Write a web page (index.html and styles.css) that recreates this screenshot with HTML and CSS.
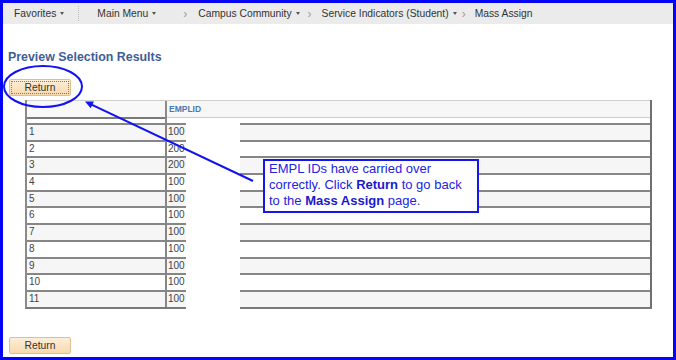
FILE: index.html
```html
<!DOCTYPE html>
<html lang="en">

<head>
    <meta charset="UTF-8">
    <meta name="viewport" content="width=device-width, initial-scale=1.0">
    <title>Mass Assign - Preview Selection Results</title>
    <link rel="stylesheet" href="styles.css">
</head>

<body>
    <div class="frame">
        <!-- top navigation / breadcrumbs -->
        <div class="nav">
            <span class="nav-item nav-fav">Favorites<i class="caret"></i></span>
            <span class="nav-sep"></span>
            <span class="nav-item nav-main">Main Menu<i class="caret"></i></span>
            <span class="crumb crumb-1">&rsaquo;</span>
            <span class="nav-item nav-cc">Campus Community<i class="caret"></i></span>
            <span class="crumb crumb-2">&rsaquo;</span>
            <span class="nav-item nav-si">Service Indicators (Student)<i class="caret"></i></span>
            <span class="crumb crumb-3">&rsaquo;</span>
            <span class="nav-item nav-ma">Mass Assign</span>
        </div>

        <h1 class="title">Preview Selection Results</h1>
        <button class="btn btn-top">Return</button>

        <!-- results grid -->
        <div class="grid">
            <div class="grid-head">
                <div class="th th-num"></div>
                <div class="th th-id">EMPLID</div>
            </div>
            <div class="grid-row"><div class="td td-num">1</div><div class="td td-id">100</div></div>
            <div class="grid-row"><div class="td td-num">2</div><div class="td td-id">200</div></div>
            <div class="grid-row"><div class="td td-num">3</div><div class="td td-id">200</div></div>
            <div class="grid-row"><div class="td td-num">4</div><div class="td td-id">100</div></div>
            <div class="grid-row"><div class="td td-num">5</div><div class="td td-id">100</div></div>
            <div class="grid-row"><div class="td td-num">6</div><div class="td td-id">100</div></div>
            <div class="grid-row"><div class="td td-num">7</div><div class="td td-id">100</div></div>
            <div class="grid-row"><div class="td td-num">8</div><div class="td td-id">100</div></div>
            <div class="grid-row"><div class="td td-num">9</div><div class="td td-id">100</div></div>
            <div class="grid-row"><div class="td td-num">10</div><div class="td td-id">100</div></div>
            <div class="grid-row"><div class="td td-num">11</div><div class="td td-id">100</div></div>
            <!-- blanked out part of the ids -->
            <div class="redact"></div>
        </div>

        <button class="btn btn-bottom">Return</button>

        <!-- annotation: circle + arrow -->
        <svg class="marks" width="676" height="360" viewBox="0 0 676 360">
            <ellipse cx="43" cy="86.5" rx="39" ry="20.5" fill="none" stroke="#1212f2" stroke-width="2" />
            <line x1="91" y1="104.4" x2="253" y2="181" stroke="#1212f2" stroke-width="2" />
            <polygon points="85,101.5 90.7,108.3 93.9,101.5" fill="#1212f2" />
        </svg>

        <div class="callout">
            EMPL IDs have carried over<br>
            correctly. Click <b>Return</b> to go back<br>
            to the <b>Mass Assign</b> page.
        </div>
    </div>
</body>

</html>
```

FILE: styles.css
```css
html,
body {
    margin: 0;
    padding: 0;
    background: #fff;
}

.frame {
    width: 676px;
    height: 360px;
    box-sizing: border-box;
    border: 3px solid #0505f5;
    position: relative;
    overflow: hidden;
    background: #fff;
    font-family: "Liberation Sans", Arial, sans-serif;
}

/* 导航条 */
.nav {
    height: 21px;
    background: #ebebeb;
    display: flex;
    align-items: center;
    padding-left: 11px;
    font-size: 10.3px;
    color: #333;
    white-space: nowrap;
}

.nav-item {
    display: flex;
    align-items: center;
}

.caret {
    display: inline-block;
    width: 0;
    height: 0;
    border-left: 2.5px solid transparent;
    border-right: 2.5px solid transparent;
    border-top: 3px solid #555;
    margin-left: 4px;
}

.nav-sep {
    width: 0;
    height: 15px;
    border-left: 1px dotted #bdbdbd;
    margin-left: 14px;
}

.nav-main {
    margin-left: 18px;
}

.crumb {
    color: #a0a0a0;
    font-size: 12px;
    line-height: 12px;
}

.crumb-1 {
    margin-left: 27px;
}

.nav-cc {
    margin-left: 11px;
}

.crumb-2 {
    margin-left: 8px;
}

.nav-si {
    margin-left: 10px;
}

.crumb-3 {
    margin-left: 5px;
}

.nav-ma {
    margin-left: 9px;
}

.title {
    margin: 26px 0 0 5px;
    font-size: 12.4px;
    line-height: 15px;
    font-weight: bold;
    color: #3f5e95;
}

/* 按钮 */
.btn {
    display: block;
    width: 62px;
    height: 17px;
    box-sizing: border-box;
    margin: 14px 0 0 6px;
    padding: 0;
    border: 1px solid #dcbf94;
    border-radius: 2px;
    background: linear-gradient(#fdeed8, #f8d9ad);
    font-family: "Liberation Sans", Arial, sans-serif;
    font-size: 10.3px;
    color: #333;
}

.btn-top {
    outline: 1px dotted #8a7a66;
    outline-offset: -3px;
}

.btn-bottom {
    margin-top: 28px;
}

/* 表格 */
.grid {
    position: relative;
    width: 627px;
    box-sizing: border-box;
    margin: 4px 0 0 22px;
    border-left: 2px solid #8a8a8a;
    border-right: 2px solid #707070;
    border-bottom: 2px solid #7a7a7a;
}

.grid-head {
    display: flex;
    height: 22px;
    border-top: 1px solid #cfcfcf;
}

.th-num {
    width: 138px;
    background: linear-gradient(#f8f8f8 0 16px, #7a7a7a 16px 18px, #fff 18px);
}

.th-id {
    flex: 1;
    border-left: 2px solid #8a8a8a;
    padding-left: 2px;
    background: linear-gradient(#f7f7f7 0 16px, #cdcdcd 16px 17px, #fff 17px);
    font-size: 8.5px;
    line-height: 16px;
    font-weight: bold;
    color: #4a78b0;
}

.grid-row {
    display: flex;
    height: 16.7px;
    box-sizing: border-box;
    border-top: 2px solid #868686;
    font-size: 10px;
    line-height: 14.7px;
    color: #444;
}

.grid-row:nth-child(even) {
    background: #f6f6f6;
}

.td-num {
    width: 138px;
    box-sizing: border-box;
    padding-left: 2px;
}

.td-id {
    flex: 1;
    border-left: 2px solid #868686;
    padding-left: 1px;
}

.redact {
    position: absolute;
    left: 159px;
    width: 54px;
    top: 20px;
    bottom: -2px;
    background: #fff;
}

/* 标注 */
.marks {
    position: absolute;
    left: -3px;
    top: -3px;
    pointer-events: none;
}

.callout {
    position: absolute;
    left: 260px;
    top: 156px;
    width: 216px;
    height: 54px;
    box-sizing: border-box;
    border: 2px solid #1515f0;
    background: #fff;
    padding: 0 0 0 4px;
    font-size: 13px;
    line-height: 16px;
    color: #2323e2;
    white-space: nowrap;
}

.callout b {
    color: #1a1acc;
}
```
